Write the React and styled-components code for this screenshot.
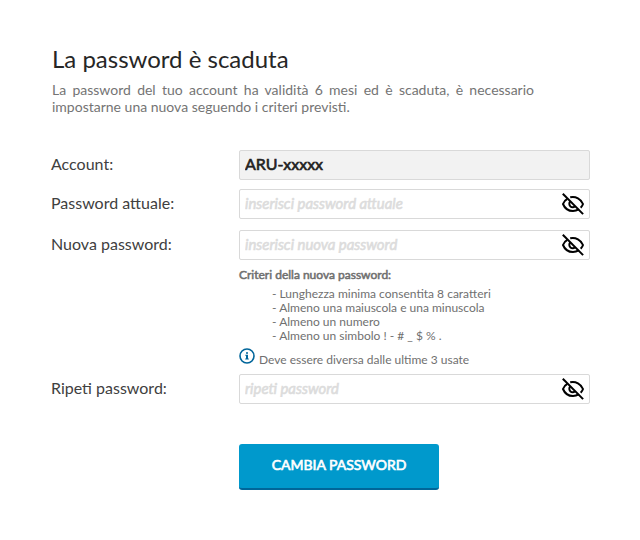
import React from "react";
import styled, { createGlobalStyle } from "styled-components";

const GlobalStyle = createGlobalStyle`
  * { box-sizing: border-box; }
  body { margin: 0; background: #fff; font-family: Lato, "Liberation Sans", sans-serif; }
`;

const Page = styled.main`
  width: 640px;
  height: 540px;
  padding: 44px 50px 0 51px;
  overflow: hidden;
  background: #fff;
`;

const Title = styled.h1`
  margin: 0;
  padding-left: 1px;
  font-size: 24px;
  line-height: 30px;
  font-weight: 400;
  color: #262626;
`;

const Intro = styled.p`
  width: 483px;
  margin: 7px 0 0;
  padding-left: 1px;
  font-size: 14px;
  line-height: 17px;
  color: #747474;
  text-align: justify;
`;

const Form = styled.form`
  display: grid;
  grid-template-columns: 188px 351px;
  margin-top: 35px;
`;

const Label = styled.label`
  height: 30px;
  font-size: 16px;
  line-height: 27px;
  color: #404040;
`;

const Field = styled.div`
  display: flex;
  align-items: center;
  height: 30px;
  margin-bottom: ${(p) => p.$gap || 0}px;
  padding: 0 4px 0 5px;
  border: 1px solid #d9d9d9;
  border-radius: 2px;
  background: ${(p) => (p.$filled ? "#f2f2f2" : "#fff")};
`;

const Input = styled.input`
  flex: 1;
  min-width: 0;
  height: 28px;
  padding: 0 0 3px;
  border: 0;
  outline: 0;
  background: transparent;
  font-family: inherit;
  font-size: 16px;
  color: #222;
  -webkit-text-stroke: 0.6px currentColor;
  &::placeholder {
    color: #dcdcdc;
    font-size: 14.9px;
    font-style: oblique;
    opacity: 1;
  }
`;

const EyeIcon = styled.svg`
  flex: none;
  width: 24px;
  height: 24px;
  fill: none;
  stroke: #000;
  stroke-width: 2;
`;

const Criteria = styled.section`
  grid-column: 2;
  height: 114px;
  font-size: 12px;
  line-height: 14px;
  color: #707070;
`;

const CriteriaTitle = styled.div`
  padding-top: 8px;
  -webkit-text-stroke: 0.55px currentColor;
`;

const CriteriaList = styled.ul`
  margin: 5px 0 0;
  padding: 0 0 0 33px;
  list-style: none;
`;

const Note = styled.div`
  display: flex;
  align-items: flex-start;
  gap: 4px;
  margin-top: 5px;
  span { padding-top: 5px; }
`;

const InfoIcon = styled.svg`
  width: 16px;
  height: 16px;
`;

const Submit = styled.button`
  grid-column: 2;
  width: 200px;
  height: 46px;
  margin-top: 40px;
  padding: 0 0 3px;
  border: 0;
  border-bottom: 2px solid #006699;
  border-radius: 3px;
  background: #0099cc;
  color: #fff;
  font-family: inherit;
  font-size: 14px;
  -webkit-text-stroke: 0.65px currentColor;
`;

const HiddenEye = () => (
  <EyeIcon viewBox="0 0 24 24" aria-hidden="true">
    <path d="M6.300 6.800C4.300 7.900 2.700 9.700 2 12c1.700 4.200 5.400 7 10 7 2.200 0 4-.6 5.600-1.600" />
    <path d="M9.200 5.300c5.600-1.200 10.800 1.700 12.800 6.700-.5 1.500-1.200 2.600-2.300 3.700" />
    <path d="M9.200 9.500a3.300 3.300 0 1 0 5.200 4.600" />
    <path d="M1.800 1.800l20.300 20.300" />
  </EyeIcon>
);

const PasswordRow = ({ id, label, placeholder, gap }) => (
  <>
    <Label htmlFor={id}>{label}</Label>
    <Field $gap={gap}>
      <Input id={id} type="password" placeholder={placeholder} />
      <HiddenEye />
    </Field>
  </>
);

export default function App() {
  return (
    <Page>
      <GlobalStyle />
      <Title>La password è scaduta</Title>
      <Intro>
        La password del tuo account ha validità 6 mesi ed è scaduta, è necessario
        impostarne una nuova seguendo i criteri previsti.
      </Intro>
      <Form>
        <Label htmlFor="account">Account:</Label>
        <Field $filled $gap={9}>
          <Input id="account" readOnly value="ARU-xxxxx" />
        </Field>
        <PasswordRow id="current" label="Password attuale:" placeholder="inserisci password attuale" gap={11} />
        <PasswordRow id="new" label="Nuova password:" placeholder="inserisci nuova password" />
        <Criteria>
          <CriteriaTitle>Criteri della nuova password:</CriteriaTitle>
          <CriteriaList>
            <li>- Lunghezza minima consentita 8 caratteri</li>
            <li>- Almeno una maiuscola e una minuscola</li>
            <li>- Almeno un numero</li>
            <li>- Almeno un simbolo ! - # _ $ % .</li>
          </CriteriaList>
          <Note>
            <InfoIcon viewBox="0 0 16 16" aria-hidden="true">
              <circle cx="8" cy="8" r="7" fill="none" stroke="#00659a" strokeWidth="1.600" />
              <path d="M7 4.200h2v1.600H7zM6.300 6.800H9v3.800h.8v1H6.200v-1H7V7.800h-.7z" fill="#00659a" />
            </InfoIcon>
            <span>Deve essere diversa dalle ultime 3 usate</span>
          </Note>
        </Criteria>
        <PasswordRow id="repeat" label="Ripeti password:" placeholder="ripeti password" />
        <Submit type="button">CAMBIA PASSWORD</Submit>
      </Form>
    </Page>
  );
}
